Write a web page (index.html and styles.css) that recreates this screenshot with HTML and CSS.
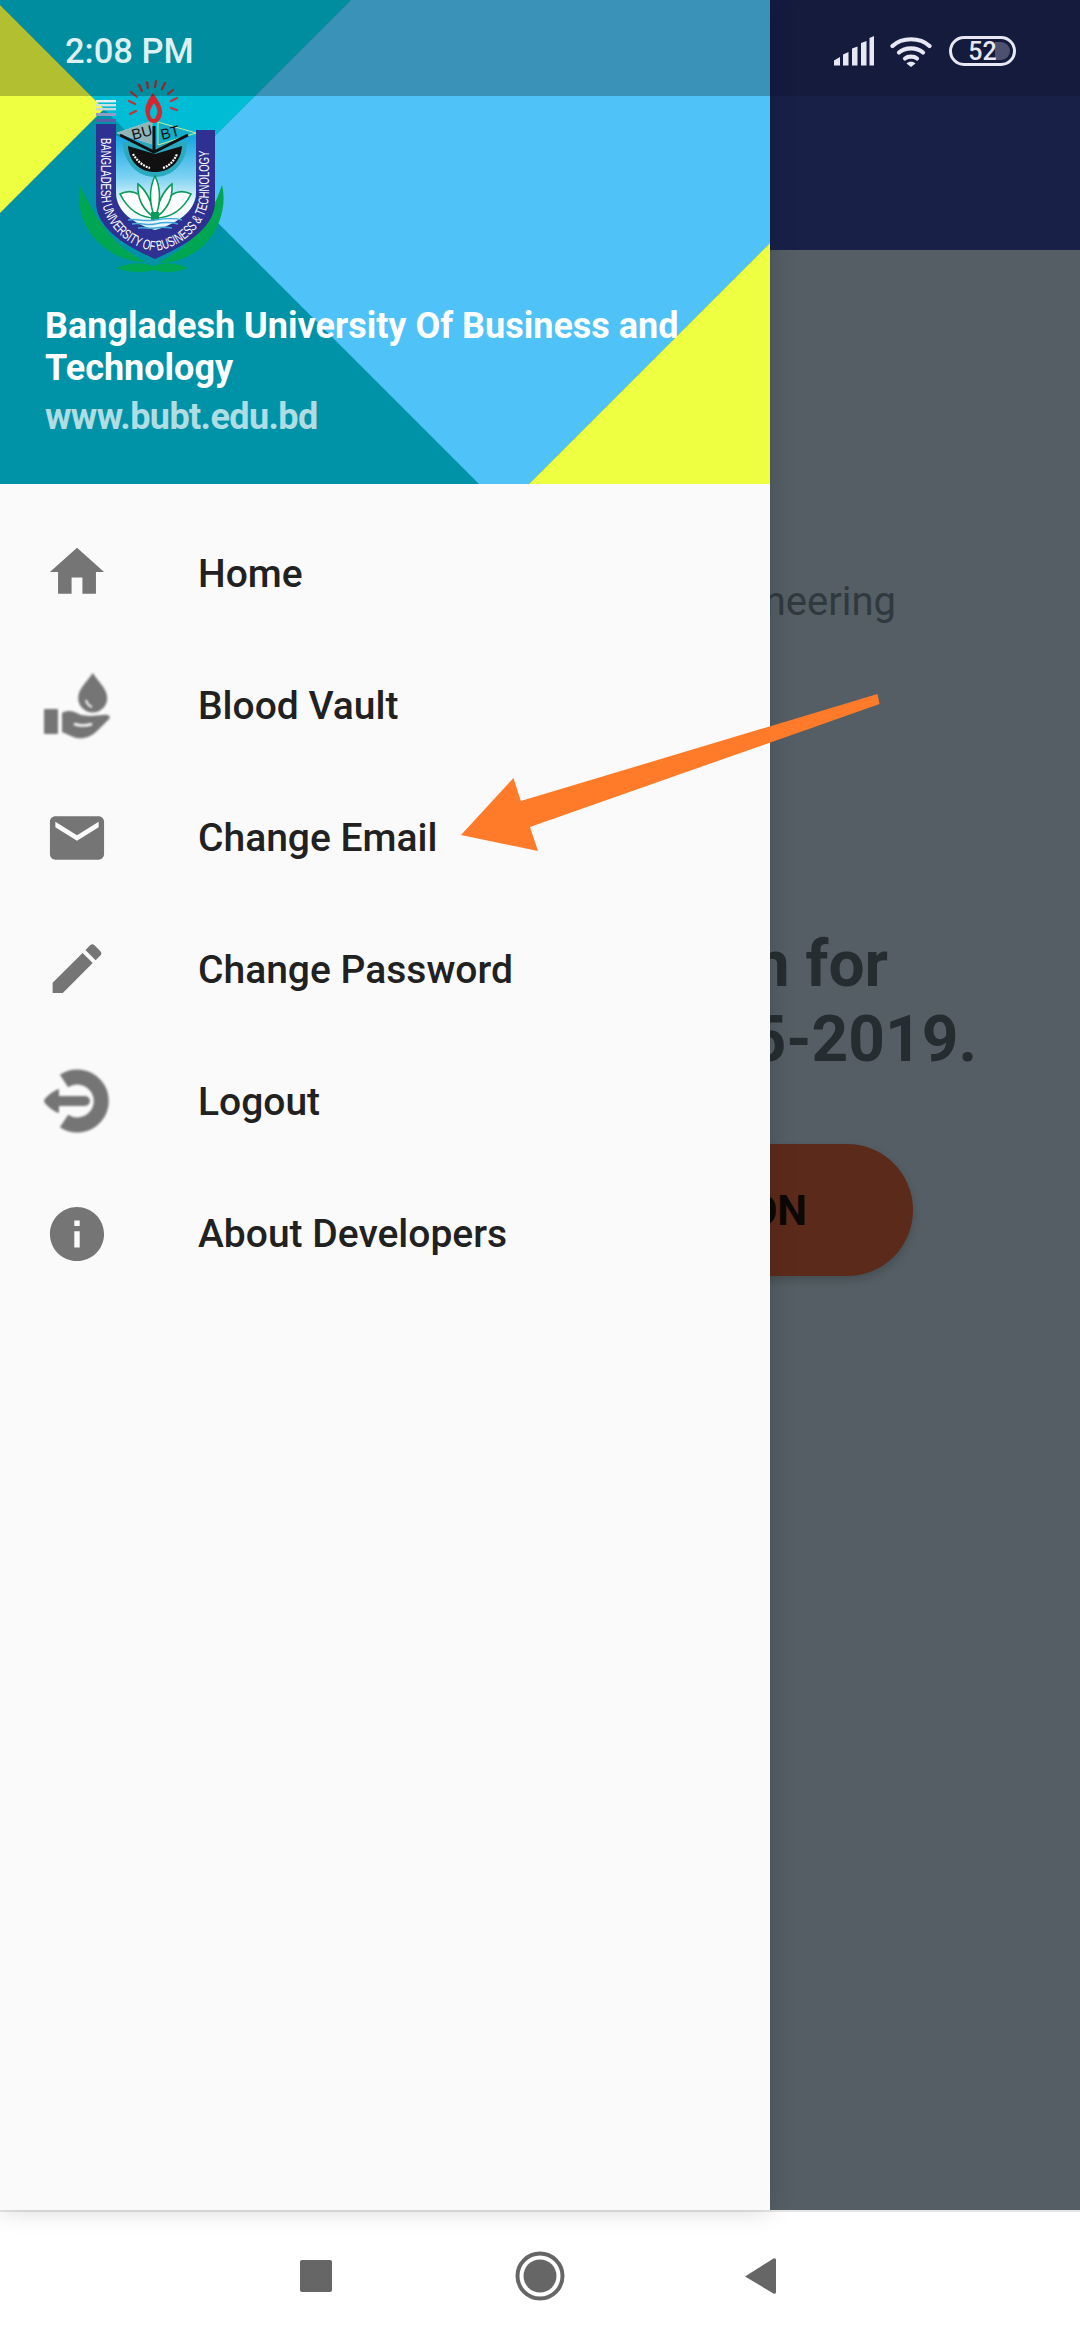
FILE: index.html
```html
<!DOCTYPE html>
<html lang="en">
<head>
<meta charset="utf-8">
<title>BUBT</title>
<link rel="stylesheet" href="styles.css">
</head>
<body>
<div class="screen">
  <div class="stage">
    <div class="app">
      <div class="appbar"></div>
      <div class="content">
        <p class="dept">ineering</p>
        <h1 class="head head-one">on for</h1>
        <h1 class="head head-two">5-2019.</h1>
        <div class="cta">ION</div>
      </div>
    </div>

    <aside class="drawer">
      <header class="drawer-head">
        <svg class="head-art" viewBox="0 0 770 484" preserveAspectRatio="none" aria-hidden="true">
          <rect width="770" height="484" fill="#0093a8"/>
          <polygon points="0,0 351,0 173,178 0,5" fill="#00bcd4"/>
          <polygon points="351,0 770,0 770,243 529,484 479,484 173,178" fill="#4fc3f7"/>
          <polygon points="770,243 770,484 529,484" fill="#eeff41"/>
          <polygon points="0,5 104,109 0,213" fill="#eeff41"/>
        </svg>
        <svg class="logo" width="190" height="210" viewBox="0 0 190 210" aria-label="BUBT logo">
          <defs>
            <linearGradient id="sky" x1="0" y1="0" x2="0" y2="1">
              <stop offset="0" stop-color="#15a5e0"/>
              <stop offset=".45" stop-color="#7fd3f3"/>
              <stop offset=".75" stop-color="#ffffff"/>
              <stop offset="1" stop-color="#dff4fb"/>
            </linearGradient>
          </defs>
          <g fill="#00a651">
            <path d="M20 116c-4 22 4 44 20 58 14 12 28 18 46 18-16-8-30-18-40-32-10-13-18-28-26-44z"/>
            <path d="M162 115c5 20-2 44-18 60-13 12-28 18-46 18 16-8 30-18 40-32 10-13 18-28 24-46z"/>
            <path d="M56 198c14-6 26-6 37-2 11-4 23-4 35 2-13 5-24 5-35 2-11 3-23 3-37-2z"/>
          </g>
          <g>
            <rect x="36" y="30" width="20" height="2.400" fill="#e6f1f4"/>
            <rect x="36" y="34" width="20" height="2.400" fill="#cfe3e6"/>
            <rect x="36" y="38" width="20" height="2.400" fill="#c9d6e0"/>
            <rect x="36" y="43" width="20" height="3" fill="#8f9dc7"/>
            <rect x="36" y="49" width="20" height="3" fill="#5960ab"/>
            <rect x="36" y="54" width="20" height="6" fill="#2e3192"/>
          </g>
          <path d="M36 60h20v62c0 20 18 32 39 38 21-6 41-18 41-38V60h19v72c0 26-30 44-60 57-30-13-59-31-59-57z" fill="#2e3192"/>
          <path d="M56 66h80v56c0 20-20 32-41 38-21-6-39-18-39-38z" fill="url(#sky)"/>
          <path d="M63 72c0 20 14 35 32 35s32-15 32-35z" fill="#2aa9bf"/>
          <path d="M68 76c1 16 12 26 27 26s26-10 27-26l-27 8z" fill="#111"/>
          <path d="M73 84c4 7 10 12 17 14M103 98c6-2 11-7 14-14" stroke="#fff" stroke-width="2.200" fill="none" stroke-dasharray="2 1"/>
          <polygon points="57,63 92,51 92,74" fill="#8fb5b8" stroke="#9dbcc0" stroke-width="1"/>
          <polygon points="98,52 136,63 98,75" fill="#12aecb" stroke="#c6ec9a" stroke-width="1"/>
          <path d="M94 56v25M60 65l34 17 34-17" stroke="#111" stroke-width="3" fill="none"/>
          <text x="73" y="70" class="logo-cap" transform="rotate(-14 73 70)">BU</text>
          <text x="102" y="70" class="logo-cap" transform="rotate(-14 102 70)">BT</text>
          <path d="M93 23c-6 8-9 15-7 21 1 6 4 9 8 9s7-4 8-9c1-7-4-14-9-21zm1 10c3 4 4 8 3 11-1 3-2 5-3.500 5s-3-2-3.500-5c-.5-3 1-7 4-11z" fill="#d4262f"/>
          <g stroke="#c2333b" stroke-width="2.200" stroke-linecap="round">
            <path d="M75 34l-6-3M77 27l-6-5M82 21l-3-6M88 18l-1-6M95 17l1-6M102 19l3-6M108 24l5-4M111 31l6-3M111 38l6 2M76 41l-6 3"/>
          </g>
          <g fill="#fff" stroke="#0a9a5a" stroke-width="1.600">
            <path d="M60 124c12-6 24-2 36 24-16 0-28-8-36-24z"/>
            <path d="M131 124c-12-6-24-2-36 24 16 0 28-8 36-24z"/>
            <path d="M78 114c8 6 14 18 17 34-12-8-18-20-17-34z"/>
            <path d="M112 114c-8 6-14 18-17 34 12-8 18-20 17-34z"/>
            <path d="M95 106c6 12 6 28 0 42-6-14-6-30 0-42z"/>
          </g>
          <rect x="91" y="142" width="8" height="8" fill="#0a9a5a"/>
          <g stroke="#3fa9dc" stroke-width="1.400" fill="none">
            <path d="M68 150c8-2 14 2 27 0s20-2 27 0M72 154c8-2 14 2 23 0s16-2 23 0M78 158c6-1 11 1 17 0s11-1 17 0"/>
          </g>
          <path id="bandline" d="M41 68V122C41 155 68 178 95 181C122 178 149 155 149 122V72" fill="none"/>
          <text class="logo-band"><textPath href="#bandline" textLength="270" lengthAdjust="spacingAndGlyphs">BANGLADESH UNIVERSITY OF BUSINESS &amp; TECHNOLOGY</textPath></text>
        </svg>
        <h2 class="uni-name">Bangladesh University Of Business and Technology</h2>
        <p class="uni-site">www.bubt.edu.bd</p>
      </header>

      <nav class="menu">
        <a class="item">
          <svg class="icon" viewBox="-1.300 -0.600 26.600 26.600"><path d="M10 20v-6h4v6h5v-8h3L12 3 2 12h3v8z"/></svg>
          <span>Home</span>
        </a>
        <a class="item">
          <svg class="icon icon-soft" viewBox="0 0 72 72">
            <path d="M51.700 3c-6 9-14.500 16-14.500 25a14.500 14.500 0 0 0 29 0c0-9-8.500-16-14.500-25z"/>
            <path d="M45 30c1 4 3 6 6 7" stroke="#fafafa" stroke-width="2" fill="none"/>
            <rect x="3" y="39" width="14" height="25" rx="1"/>
            <path d="M21 43c7-4 13-1 19 2l9 1 13-1c6-1 8 2 6 4L56 61c-8 8-18 9-26 5l-9-4z"/>
            <path d="M33 54c6 2 12 2 18 0" stroke="#fafafa" stroke-width="2.500" fill="none"/>
          </svg>
          <span>Blood Vault</span>
        </a>
        <a class="item">
          <svg class="icon" viewBox="-1.300 -1.300 26.600 26.600"><path d="M20 4H4c-1.100 0-2 .9-2 2v12c0 1.100.9 2 2 2h16c1.100 0 2-.9 2-2V6c0-1.100-.9-2-2-2zm0 4l-8 5-8-5V6l8 5 8-5v2z"/></svg>
          <span>Change Email</span>
        </a>
        <a class="item">
          <svg class="icon" viewBox="-1.300 -0.800 26.600 26.600"><path d="M3 17.250V21h3.750L17.810 9.940l-3.750-3.750L3 17.250zM20.710 7.040c.39-.39.39-1.020 0-1.410l-2.340-2.340c-.39-.39-1.020-.39-1.410 0l-1.830 1.830 3.750 3.750 1.830-1.830z"/></svg>
          <span>Change Password</span>
        </a>
        <a class="item">
          <svg class="icon icon-soft" viewBox="0 0 72 72">
            <path d="M23 15a24 24 0 1 1 0 40" fill="none" stroke="#757575" stroke-width="15"/>
            <path d="M3 35c0-3 10-11 15-12v7h26a5 5 0 0 1 0 10H18v7C13 46 3 38 3 35z"/>
          </svg>
          <span>Logout</span>
        </a>
        <a class="item">
          <svg class="icon" viewBox="-1.300 -1.300 26.600 26.600"><path d="M12 2C6.480 2 2 6.480 2 12s4.480 10 10 10 10-4.480 10-10S17.520 2 12 2zm1 15h-2v-6h2v6zm0-8h-2V7h2v2z"/></svg>
          <span>About Developers</span>
        </a>
      </nav>
    </aside>
  </div>

  <footer class="navbar">
    <svg class="nav-icon" width="32" height="32" viewBox="0 0 32 32"><rect width="32" height="32" rx="2"/></svg>
    <svg class="nav-icon nav-home" width="50" height="50" viewBox="0 0 50 50"><circle cx="25" cy="25" r="22.500" fill="none" stroke="#666" stroke-width="4"/><circle cx="25" cy="25" r="16.500"/></svg>
    <svg class="nav-icon" width="32" height="38" viewBox="0 0 32 38"><path d="M1 19.500 29.500 1.500Q32 .5 32 3v32q0 2.500-2.500 1.500z"/></svg>
  </footer>

  <div class="status">
    <div class="status-left"><span class="clock">2:08 PM</span></div>
    <div class="status-right">
      <svg class="sig" width="40" height="30" viewBox="0 0 40 30"><path d="M0 24.500 6 21v8.500H0zM9 18.500l5.500-2.500v13.500H9zM18 12.500l5.500-2v19H18zM27 7l5.500-2v24.500H27zM35.500 2 40 0v29.500h-4.500z"/></svg>
      <svg class="wifi" width="42" height="32" viewBox="0 0 42 32"><g fill="none" stroke-width="4.200" stroke-linecap="round"><path d="M2.500 11C12 2 30 2 39.500 11"/><path d="M9 17.500c6-5.500 18-5.500 24 0"/><path d="M15 23.500c3-2.500 9-2.500 12 0"/></g><path class="wifi-dot" d="M21 32l-4.500-3.500c2-2.500 7-2.500 9 0z"/></svg>
      <div class="battery"><span>52</span></div>
    </div>
  </div>

  <svg class="pointer" width="1080" height="1000" viewBox="0 0 1080 1000" aria-hidden="true">
    <polygon points="877.500,694 879.600,704 530,827 538,851 461,835 513.500,778 520.800,801" fill="#ff7a29"/>
  </svg>
</div>
</body>
</html>
```
FILE: styles.css
```css
* { box-sizing: border-box; }
html, body { margin: 0; padding: 0; }
body { font-family: Roboto, "Noto Sans", sans-serif; background: #fff; }

.screen {
  position: relative;
  width: 1080px;
  height: 2340px;
  display: flex;
  flex-direction: column;
  overflow: hidden;
}

.stage { position: relative; height: 2210px; }

/* dimmed page behind the drawer */
.app {
  height: 100%;
  background: #545e64;
  display: flex;
  flex-direction: column;
}
.appbar { height: 250px; background: #182048; flex: none; }
.content {
  flex: 1;
  display: flex;
  flex-direction: column;
  align-items: flex-end;
}
.dept {
  margin: 331px 184px 0 0;
  font-size: 40px;
  line-height: 42px;
  color: #30393e;
  white-space: nowrap;
}
.head {
  margin: 0;
  font-size: 64px;
  line-height: 75px;
  font-weight: 700;
  color: #262d31;
  white-space: nowrap;
}
.head-one { margin: 304px 192px 0 0; }
.head-two { margin-right: 103px; }
.cta {
  margin: 67px 167px 0 0;
  width: 746px;
  height: 132px;
  padding-right: 106px;
  border-radius: 66px;
  background: #5c2a1a;
  box-shadow: 0 4px 8px rgba(0,0,0,.18);
  display: flex;
  align-items: center;
  justify-content: flex-end;
  font-size: 42px;
  font-weight: 700;
  color: #0c0806;
  white-space: nowrap;
}

/* drawer */
.drawer {
  position: absolute;
  top: 0;
  left: 0;
  bottom: 0;
  width: 770px;
  background: #fafafa;
  box-shadow: 0 0 24px rgba(0,0,0,.16);
  display: flex;
  flex-direction: column;
}
.drawer-head {
  position: relative;
  height: 484px;
  flex: none;
  padding: 70px 45px 0;
  color: #fff;
}
.head-art { position: absolute; inset: 0; width: 770px; height: 484px; display: block; }
.logo { position: relative; display: block; margin-left: 15px; }
.logo-cap { font-family: "Liberation Sans", sans-serif; font-size: 15px; fill: #111; }
.logo-band { font-family: "Liberation Sans", sans-serif; font-size: 14px; font-weight: 400; fill: #fff; }
.uni-name {
  position: relative;
  margin: 25px 0 0;
  font-size: 36px;
  line-height: 42px;
  font-weight: 700;
}
.uni-site {
  position: relative;
  margin: 7px 0 0;
  font-size: 36px;
  line-height: 42px;
  font-weight: 700;
  letter-spacing: -.6px;
  color: rgba(255,255,255,.7);
}

.menu { padding-top: 24px; display: flex; flex-direction: column; }
.item {
  height: 132px;
  padding-left: 41px;
  display: flex;
  align-items: center;
  gap: 85px;
  font-size: 39px;
  font-weight: 500;
  color: #212121;
}
.icon { width: 72px; height: 72px; flex: none; fill: #757575; }
.icon-soft { filter: blur(.9px); }

/* system bars */
.navbar {
  height: 130px;
  background: #fff;
  border-top: 2px solid #e6e6e6;
  display: flex;
  align-items: center;
  padding-left: 300px;
}
.nav-icon { fill: #666; display: block; }
.nav-home { margin: 0 179px 0 183px; }

.status {
  position: absolute;
  top: 0;
  left: 0;
  right: 0;
  height: 96px;
  display: flex;
}
.status-left {
  width: 770px;
  height: 100%;
  padding: 6px 0 0 65px;
  display: flex;
  align-items: center;
  background: rgba(0,0,0,.25);
}
.clock {
  font-size: 34.500px;
  font-weight: 500;
  color: rgba(255,255,255,.88);
}
.status-right {
  flex: 1;
  height: 100%;
  padding: 6px 64px 0 0;
  display: flex;
  align-items: center;
  justify-content: flex-end;
  background: rgba(0,0,0,.14);
}
.sig { fill: #e8e8f4; margin-right: 16px; }
.wifi { margin-right: 17px; stroke: #e8e8f4; }
.wifi-dot { fill: #e8e8f4; stroke: none; }
.battery {
  position: relative;
  width: 67px;
  height: 30px;
  border: 3px solid #e8e8f4;
  border-radius: 15px;
  display: flex;
  align-items: center;
  justify-content: center;
  font-size: 25px;
  font-weight: 500;
  color: #e8e8f4;
}
.battery::before {
  content: "";
  position: absolute;
  top: 3px;
  bottom: 3px;
  right: 3px;
  width: 15px;
  border-radius: 0 10px 10px 0;
  background: #4e5070;
}
.battery span { position: relative; }

.pointer { position: absolute; top: 0; left: 0; }
```
